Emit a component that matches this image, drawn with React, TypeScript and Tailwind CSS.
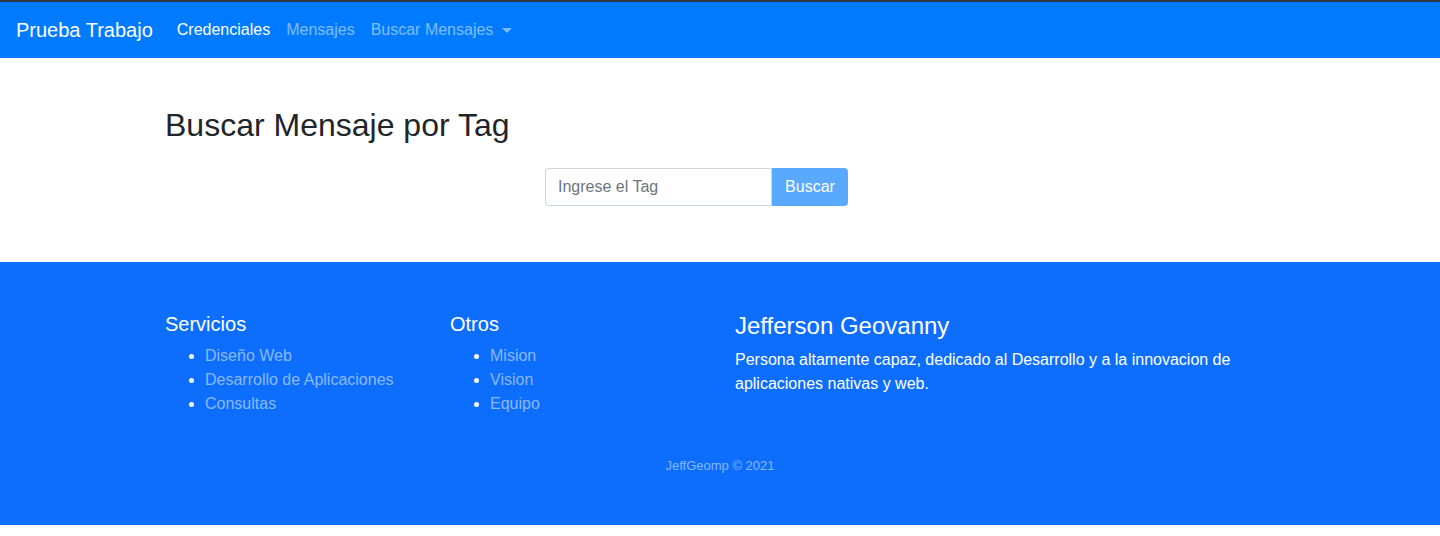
import React, { useState } from 'react';

const FONT = "font-['Liberation_Sans',Arial,sans-serif]";

function Navbar() {
    return (
        <nav className="border-t-2 border-[#343a40] bg-[#007bff] h-[58px] flex items-center px-4">
            <a href="#" className="text-white text-[20px] leading-[30px] mr-4">
                Prueba Trabajo
            </a>
            <ul className="flex items-center text-[16px] leading-6">
                <li>
                    <a href="#" className="px-2 py-2 text-white">Credenciales</a>
                </li>
                <li>
                    <a href="#" className="px-2 py-2 text-white/50">Mensajes</a>
                </li>
                <li>
                    <a href="#" className="px-2 py-2 text-white/50 flex items-center">
                        Buscar Mensajes
                        <span className="ml-[9px] w-0 h-0 border-x-[5px] border-x-transparent border-t-[5px] border-t-white/50" />
                    </a>
                </li>
            </ul>
        </nav>
    );
}

function SearchByTag() {
    const [tag, setTag] = useState('');

    return (
        <section className="w-[1140px] mx-auto px-[15px] pt-[48px] h-[204px]">
            <h2 className="text-[32px] leading-[38px] font-medium text-[#212529]">
                Buscar Mensaje por Tag
            </h2>
            <form
                onSubmit={(e) => e.preventDefault()}
                className="flex mt-[24px] ml-[380px]"
            >
                <input
                    type="text"
                    value={tag}
                    onChange={(e) => setTag(e.target.value)}
                    placeholder="Ingrese el Tag"
                    className="w-[227px] h-[38px] border border-[#ced4da] rounded-l-[4px] px-3 text-[16px] text-[#495057] placeholder:text-[#6c757d] focus:outline-none"
                />
                <button
                    type="submit"
                    className="w-[76px] h-[38px] bg-[#59a9ff] text-white text-[16px] rounded-r-[4px]"
                >
                    Buscar
                </button>
            </form>
        </section>
    );
}

function Footer() {
    const servicios = ['Diseño Web', 'Desarrollo de Aplicaciones', 'Consultas'];
    const otros = ['Mision', 'Vision', 'Equipo'];

    return (
        <footer className="bg-[#0d6efd] text-white h-[263px] pt-[49px]">
            <div className="w-[1140px] mx-auto grid grid-cols-4">
                <div className="px-[15px] pt-[1px]">
                    <h5 className="text-[20px] leading-[24px] font-medium">Servicios</h5>
                    <ul className="mt-[8px] pl-[40px] list-disc text-[16px] leading-6">
                        {servicios.map((s) => (
                            <li key={s} className="marker:text-white">
                                <a href="#" className="text-[#8ab8ff]">{s}</a>
                            </li>
                        ))}
                    </ul>
                </div>
                <div className="px-[15px] pt-[1px]">
                    <h5 className="text-[20px] leading-[24px] font-medium">Otros</h5>
                    <ul className="mt-[8px] pl-[40px] list-disc text-[16px] leading-6">
                        {otros.map((o) => (
                            <li key={o} className="marker:text-white">
                                <a href="#" className="text-[#8ab8ff]">{o}</a>
                            </li>
                        ))}
                    </ul>
                </div>
                <div className="col-span-2 px-[15px]">
                    <h4 className="text-[24px] leading-[29px] font-medium">Jefferson Geovanny</h4>
                    <p className="mt-[8px] text-[16px] leading-6 pr-[30px]">
                        Persona altamente capaz, dedicado al Desarrollo y a la innovacion de aplicaciones nativas y web.
                    </p>
                </div>
            </div>
            <p className="mt-[40px] text-center text-[13px] leading-[20px] text-[#86b6fe]">
                JeffGeomp © 2021
            </p>
        </footer>
    );
}

export default function App() {
    return (
        <div className={`${FONT} bg-white min-h-[536px]`}>
            <Navbar />
            <SearchByTag />
            <Footer />
        </div>
    );
}
